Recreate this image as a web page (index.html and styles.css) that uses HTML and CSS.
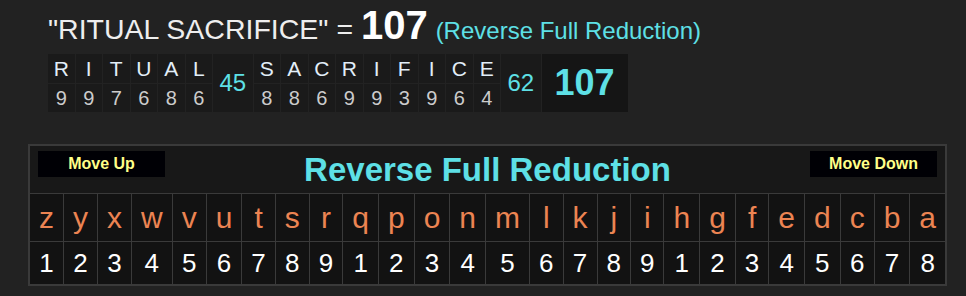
FILE: index.html
```html
<!DOCTYPE html>
<html>
<head>
<meta charset="utf-8">
<link rel="stylesheet" href="styles.css">
</head>
<body>
<div class="result">
  <h1 class="phrase">"RITUAL SACRIFICE" = <b class="total">107</b> <span class="cname">(Reverse Full Reduction)</span></h1>
  <table class="breakdown">
    <tr>
      <td class="bl">R</td><td class="bl">I</td><td class="bl">T</td><td class="bl">U</td><td class="bl">A</td><td class="bl">L</td>
      <td class="bsum" rowspan="2">45</td>
      <td class="bl">S</td><td class="bl">A</td><td class="bl">C</td><td class="bl">R</td><td class="bl">I</td><td class="bl">F</td><td class="bl">I</td><td class="bl">C</td><td class="bl">E</td>
      <td class="bsum" rowspan="2">62</td>
      <td class="btotal" rowspan="2">107</td>
    </tr>
    <tr>
      <td class="bn">9</td><td class="bn">9</td><td class="bn">7</td><td class="bn">6</td><td class="bn">8</td><td class="bn">6</td>
      <td class="bn">8</td><td class="bn">8</td><td class="bn">6</td><td class="bn">9</td><td class="bn">9</td><td class="bn">3</td><td class="bn">9</td><td class="bn">6</td><td class="bn">4</td>
    </tr>
  </table>
</div>

<div class="cipher-box">
  <div class="cipher-head">
    <button class="move">Move Up</button>
    <div class="cipher-title">Reverse Full Reduction</div>
    <button class="move">Move Down</button>
  </div>
  <table class="cipher">
    <tr class="letters">
      <td>z</td><td>y</td><td>x</td><td>w</td><td>v</td><td>u</td><td>t</td><td>s</td><td>r</td><td>q</td><td>p</td><td>o</td><td>n</td><td>m</td><td>l</td><td>k</td><td>j</td><td>i</td><td>h</td><td>g</td><td>f</td><td>e</td><td>d</td><td>c</td><td>b</td><td>a</td>
    </tr>
    <tr class="values">
      <td>1</td><td>2</td><td>3</td><td>4</td><td>5</td><td>6</td><td>7</td><td>8</td><td>9</td><td>1</td><td>2</td><td>3</td><td>4</td><td>5</td><td>6</td><td>7</td><td>8</td><td>9</td><td>1</td><td>2</td><td>3</td><td>4</td><td>5</td><td>6</td><td>7</td><td>8</td>
    </tr>
  </table>
</div>
</body>
</html>
```

FILE: styles.css
```css
html, body {
  margin: 0;
  padding: 0;
  background: #222222;
}
body {
  font-family: "Liberation Sans", Arial, sans-serif;
  width: 966px;
  height: 296px;
  overflow: hidden;
}
.result {
  padding: 5px 0 0 48px;
}
.phrase {
  margin: 0;
  font-weight: normal;
  font-size: 28.5px;
  line-height: 40px;
  height: 43px;
  color: #eeeeee;
  white-space: nowrap;
}
.total {
  font-size: 40px;
  font-weight: bold;
  color: #ffffff;
  line-height: 40px;
}
.cname {
  font-size: 24px;
  color: #5ee0e6;
}
.breakdown {
  margin: 5px 0 0 -1px;
  border-collapse: separate;
  border-spacing: 1px;
}
.breakdown td {
  padding: 0;
  text-align: center;
  background: #1a1a1a;
}
.bl {
  width: 26.5px;
  height: 29px;
  font-size: 21px;
  color: #e2eef8;
}
.bn {
  height: 28px;
  font-size: 20px;
  color: #cccccc;
}
.bsum {
  width: 39.5px;
  font-size: 24px;
  color: #5ee0e6;
}
.btotal {
  width: 86px;
  font-size: 36px;
  font-weight: bold;
  color: #5ee0e6;
  background: #151515 !important;
}
.cipher-box {
  margin: 31px 0 0 28px;
  width: 915px;
  border: 2px solid #3a3a3a;
  background: #181818;
}
.cipher-head {
  display: flex;
  align-items: flex-start;
  height: 48px;
  padding: 5px 8px 0;
  box-sizing: border-box;
  border-bottom: 1px solid #3a3a3a;
}
.move {
  width: 127px;
  height: 26px;
  padding: 0;
  border: none;
  background: #000005;
  color: #ffff88;
  font-family: "Liberation Sans", Arial, sans-serif;
  font-weight: bold;
  font-size: 16px;
}
.cipher-title {
  flex: 1;
  text-align: center;
  font-weight: bold;
  font-size: 33px;
  color: #5ee0e6;
  line-height: 37px;
}
.cipher {
  width: 100%;
  border-collapse: collapse;
  border-style: hidden;
  background: #121212;
}
.cipher td {
  border: 1px solid #3a3a3a;
  text-align: center;
  padding: 0 9px;
}
.letters td {
  height: 47px;
  font-size: 30px;
  color: #ec8452;
}
.values td {
  height: 42px;
  font-size: 26px;
  color: #ffffff;
}
```
